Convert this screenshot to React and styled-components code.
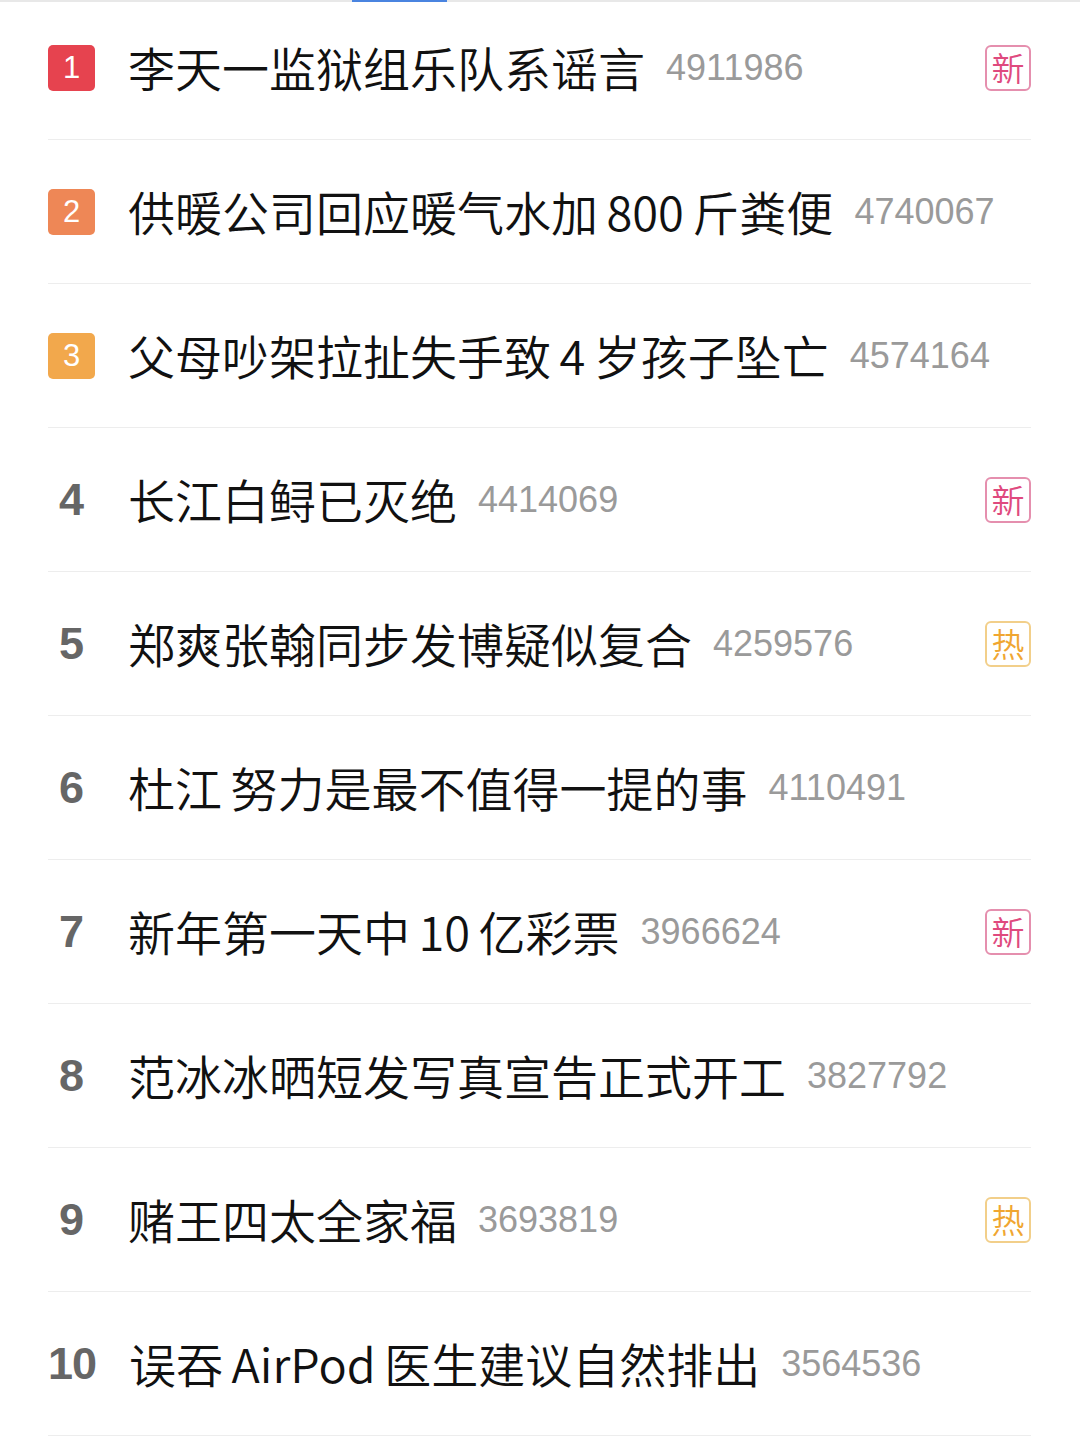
import React from 'react'
import styled, { createGlobalStyle } from 'styled-components'

const GlobalStyle = createGlobalStyle`
  html, body {
    margin: 0;
    padding: 0;
    background: #fff;
  }
  body {
    font-family: "Noto Sans CJK SC", "Noto Sans", sans-serif;
    -webkit-font-smoothing: antialiased;
  }
`

const Page = styled.div`
  width: 1080px;
  background: #fff;
  overflow: hidden;
`

const TabLine = styled.div`
  position: relative;
  z-index: 1;
  height: 2px;
  background: #e8e8e8;
  display: flex;
`

const TabIndicator = styled.div`
  margin-left: 352px;
  width: 95px;
  height: 2px;
  background: #4a84e0;
`

const List = styled.ul`
  list-style: none;
  margin: -6px 0 0;
  padding: 0 49px 0 48px;
`

const Row = styled.li`
  display: flex;
  align-items: center;
  height: 143px;
  border-bottom: 1px solid #ededed;
`

const rankColors = { 1: '#e6434f', 2: '#ee8756', 3: '#f2a84c' }

const RankBox = styled.span`
  flex: 0 0 47px;
  height: 46px;
  display: flex;
  align-items: center;
  justify-content: center;
  border-radius: 5px;
  background: ${p => p.$color || 'transparent'};
  color: ${p => (p.$color ? '#fff' : '#666')};
  font-family: "Liberation Sans", Arial, sans-serif;
  font-size: ${p => (p.$color ? '31px' : '45px')};
  font-weight: ${p => (p.$color ? 400 : 700)};
  letter-spacing: ${p => (p.$wide ? '-1px' : '0')};
`

const Title = styled.span`
  margin-left: 33px;
  margin-bottom: 3px;
  font-family: "Noto Sans CJK SC", "Noto Sans", sans-serif;
  font-size: 47px;
  font-weight: 350;
  word-spacing: -2px;
  color: #111;
  white-space: pre;
  line-height: 1;
`

const Count = styled.span`
  margin-left: 21px;
  font-family: "Liberation Sans", Arial, sans-serif;
  font-size: 36px;
  color: #9a9a9a;
`

const tagStyles = {
  新: { border: '#e58fae', color: '#df4a7e' },
  热: { border: '#f2cf8a', color: '#f0a631' },
}

const Tag = styled.span`
  margin-left: auto;
  width: 42px;
  height: 42px;
  display: flex;
  align-items: center;
  justify-content: center;
  border: 2px solid ${p => tagStyles[p.$kind].border};
  border-radius: 6px;
  color: ${p => tagStyles[p.$kind].color};
  font-family: "Noto Sans CJK SC", sans-serif;
  font-size: 33px;
  font-weight: 350;
  line-height: 1;
`

const items = [
  { title: '李天一监狱组乐队系谣言', count: '4911986', tag: '新' },
  { title: '供暖公司回应暖气水加 800 斤粪便', count: '4740067' },
  { title: '父母吵架拉扯失手致 4 岁孩子坠亡', count: '4574164' },
  { title: '长江白鲟已灭绝', count: '4414069', tag: '新' },
  { title: '郑爽张翰同步发博疑似复合', count: '4259576', tag: '热' },
  { title: '杜江 努力是最不值得一提的事', count: '4110491' },
  { title: '新年第一天中 10 亿彩票', count: '3966624', tag: '新' },
  { title: '范冰冰晒短发写真宣告正式开工', count: '3827792' },
  { title: '赌王四太全家福', count: '3693819', tag: '热' },
  { title: '误吞 AirPod 医生建议自然排出', count: '3564536' },
]

export default function App() {
  return (
    <Page>
      <GlobalStyle />
      <TabLine>
        <TabIndicator />
      </TabLine>
      <List>
        {items.map((item, i) => (
          <Row key={i}>
            <RankBox $color={rankColors[i + 1]} $wide={i + 1 >= 10}>{i + 1}</RankBox>
            <Title>{item.title}</Title>
            <Count>{item.count}</Count>
            {item.tag && <Tag $kind={item.tag}>{item.tag}</Tag>}
          </Row>
        ))}
      </List>
    </Page>
  )
}
